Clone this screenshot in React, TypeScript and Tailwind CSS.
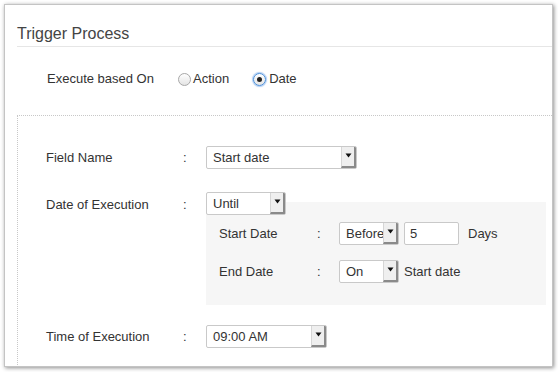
import React from 'react';

const font = { fontFamily: '"Liberation Sans", Arial, Helvetica, sans-serif' };

function Select({ value, width }: { value: string; width: string }) {
  return (
    <div
      className={`relative z-10 flex h-[23px] items-stretch overflow-hidden rounded-[2px] border border-[#c9c9c9] bg-white ${width}`}
    >
      <span className="flex-1 overflow-hidden whitespace-nowrap pl-[6px] pt-[3px] text-[13px] leading-[16px] text-[#333]">
        {value}
      </span>
      <span className="flex w-[15px] items-center justify-center border-b-2 border-l border-r-2 border-b-[#8a8a8a] border-l-[#d6d6d6] border-r-[#8a8a8a] bg-[#efefef]">
        <svg width="7" height="5" viewBox="0 0 7 5" className="-mt-[2px]">
          <path d="M0.5 0.5 L6.5 0.5 L3.5 4.5 Z" fill="#111" />
        </svg>
      </span>
    </div>
  );
}

function Radio({ checked }: { checked?: boolean }) {
  return (
    <span
      className={`flex h-[13px] w-[13px] items-center justify-center rounded-full border bg-gradient-to-b from-white to-[#e4e4e4] ${
        checked ? 'border-[#4a8fd9] shadow-[0_0_1px_1px_rgba(90,150,230,0.5)]' : 'border-[#a8a8a8]'
      }`}
    >
      {checked && <span className="h-[5px] w-[5px] rounded-full bg-[#222]" />}
    </span>
  );
}

export default function App() {
  return (
    <div className="h-[372px] w-[558px] bg-white p-[4px]" style={font}>
      <div className="h-[363px] w-[549px] overflow-hidden border border-[#c4c4c4] bg-white shadow-[1px_1px_4px_rgba(0,0,0,0.45)]">
        {/* Header */}
        <div className="ml-[12px] border-b border-[#e6e6e6] pb-[2px] pt-[19px]">
          <h2 className="text-[16px] leading-[20px] text-[#444]">Trigger Process</h2>
        </div>

        {/* Execute based on */}
        <div className="mt-[24px] flex h-[16px] items-center pl-[42px] text-[13px] text-[#333]">
          <span className="w-[131px]">Execute based On</span>
          <label className="flex items-center gap-[1px]">
            <Radio />
            <span className="ml-[1px]">Action</span>
          </label>
          <label className="ml-[24px] flex items-center gap-[2px]">
            <Radio checked />
            <span className="ml-[1px]">Date</span>
          </label>
        </div>

        {/* Dotted section */}
        <div className="ml-[12px] mt-[28px] h-[260px] border-l border-t border-dotted border-[#c8c8c8] pl-[28px] pt-[30px] text-[13px] text-[#333]">
          <div className="flex items-center">
            <span className="w-[137px]">Field Name</span>
            <span className="w-[23px]">:</span>
            <Select value="Start date" width="w-[151px]" />
          </div>

          <div className="mt-[23px] flex items-start">
            <span className="mt-[3px] w-[137px]">Date of Execution</span>
            <span className="mt-[3px] w-[23px]">:</span>
            <div className="flex flex-col">
              <Select value="Until" width="w-[80px]" />
              <div className="-mt-[13px] w-[340px] bg-[#f6f6f6] pb-[22px] pl-[13px] pt-[20px]">
                <div className="flex items-center">
                  <span className="w-[98px]">Start Date</span>
                  <span className="w-[22px]">:</span>
                  <Select value="Before" width="w-[60px]" />
                  <div className="ml-[5px] h-[23px] w-[55px] rounded-[2px] border border-[#c9c9c9] bg-white pl-[5px] pt-[3px] leading-[16px]">
                    5
                  </div>
                  <span className="ml-[9px]">Days</span>
                </div>
                <div className="mt-[15px] flex items-center">
                  <span className="w-[98px]">End Date</span>
                  <span className="w-[22px]">:</span>
                  <Select value="On" width="w-[60px]" />
                  <span className="ml-[5px]">Start date</span>
                </div>
              </div>
            </div>
          </div>

          <div className="mt-[20px] flex items-center">
            <span className="w-[137px]">Time of Execution</span>
            <span className="w-[23px]">:</span>
            <Select value="09:00 AM" width="w-[121px]" />
          </div>
        </div>
      </div>
    </div>
  );
}
